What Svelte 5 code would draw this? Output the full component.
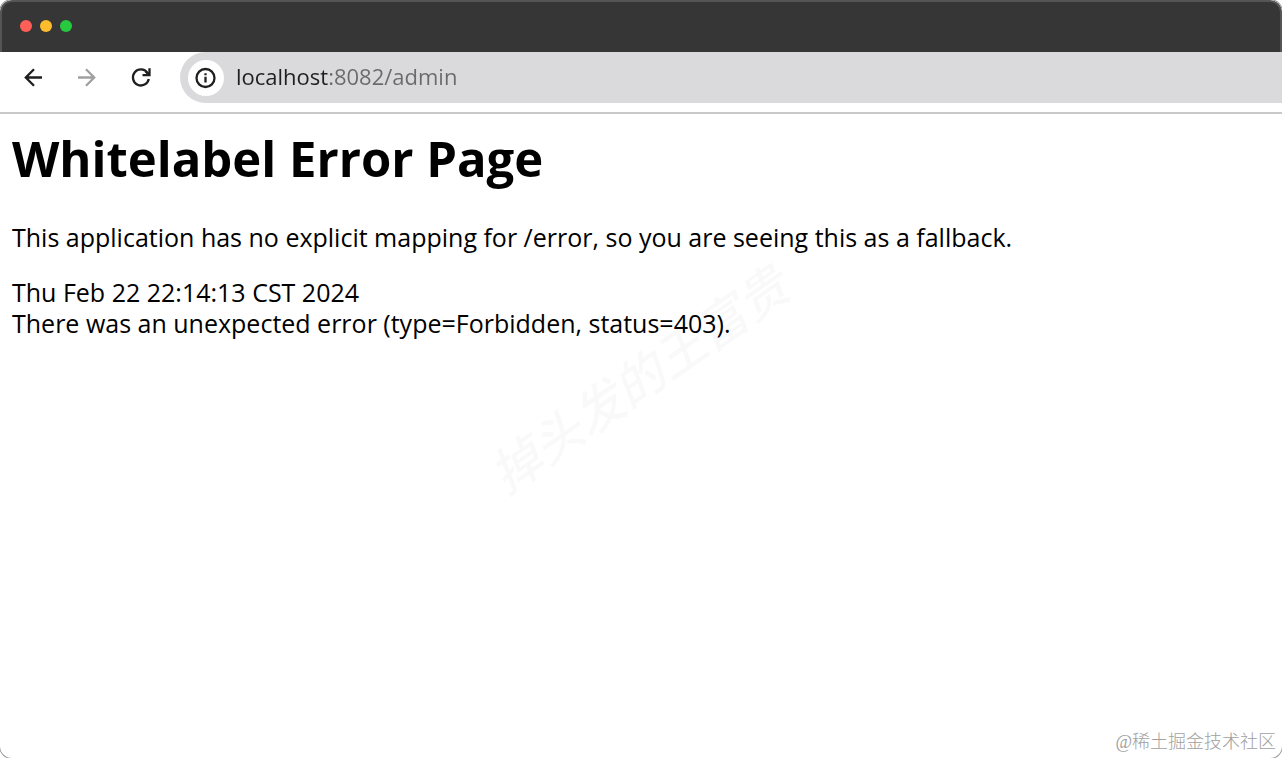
<script>
	let address = 'localhost:8082/admin';

	const lights = ['#ff5f56', '#ffbd2e', '#27c93f'];
</script>

<div class="window">
	<div class="titlebar">
		{#each lights as color}
			<span class="light" style="background: {color}"></span>
		{/each}
	</div>

	<div class="toolbar">
		<button class="tool" aria-label="Back">
			<svg viewBox="0 0 22 22"><path d="M20 11.500H4M12 3.300L3.800 11.500l8.200 8.200" /></svg>
		</button>
		<button class="tool tool__disabled" aria-label="Forward" disabled>
			<svg viewBox="0 0 22 22"><path d="M2 11.500H18M10 3.300l8.200 8.200-8.200 8.200" /></svg>
		</button>
		<button class="tool" aria-label="Reload">
			<svg viewBox="0 0 22 22">
				<path d="M18.800 13a8 8 0 1 1-1.400-6.300L19 8.500" />
				<path d="M19.500 2.200v7H12.500M19 8.500L15.500 5.500" />
			</svg>
		</button>
		<div class="address">
			<button class="info" aria-label="View site information">
				<svg viewBox="0 0 22 22">
					<circle cx="10.500" cy="11" r="9" />
					<path d="M10.500 9.800v5.700M10.500 6.200v2.100" />
				</svg>
			</button>
			<input class="address__input" type="text" aria-label="Address" spellcheck="false" bind:value={address} />
		</div>
	</div>

	<main class="page">
		<h1>Whitelabel Error Page</h1>
		<p>This application has no explicit mapping for /error, so you are seeing this as a fallback.</p>
		<div>Thu Feb 22 22:14:13 CST 2024</div>
		<div>There was an unexpected error (type=Forbidden, status=403).</div>
	</main>

	<div class="watermark">掉头发的王富贵</div>
	<div class="credit">@稀土掘金技术社区</div>
</div>

<style>
	:global(body) {
		background: #fff;
	}

	.window {
		box-sizing: border-box;
		position: relative;
		min-height: 100vh;
		overflow: hidden;
		border-radius: 12px;
		background: #fff;
		box-shadow: 0 0 0 1px #999;
		font-family: 'Open Sans', 'Noto Sans CJK SC', sans-serif;
	}

	.titlebar {
		box-sizing: border-box;
		height: 52px;
		display: flex;
		align-items: center;
		gap: 8px;
		padding: 0 18px 2px;
		border: 2px solid #555;
		border-bottom: 0;
		border-radius: 12px 12px 0 0;
		background: #363636;
	}

	.light {
		width: 12px;
		height: 12px;
		border-radius: 50%;
	}

	.toolbar {
		display: flex;
		align-items: flex-start;
		padding-left: 22px;
		padding-bottom: 9px;
		border-bottom: 2px solid #c9c9c9;
	}

	button {
		display: flex;
		align-items: center;
		justify-content: center;
		padding: 0;
		border: 0;
		background: none;
		color: #1f1f1f;
	}

	svg {
		width: 22px;
		height: 22px;
		fill: none;
		stroke: currentColor;
		stroke-width: 2.3;
	}

	.tool {
		width: 22px;
		height: 50px;
		margin-right: 32px;
	}

	.tool__disabled {
		color: #a0a0a0;
	}

	.address {
		flex: 1;
		display: flex;
		align-items: center;
		gap: 12px;
		height: 51px;
		padding-left: 8px;
		margin-left: -4px;
		border-radius: 26px 0 0 26px;
		background: #dadadc;
	}

	.info {
		width: 36px;
		height: 36px;
		border-radius: 50%;
		background: #fff;
	}

	/* host name is darker than the port and path */
	.address__input {
		flex: 1;
		min-width: 0;
		height: 34px;
		padding: 0 0 3px;
		border: 0;
		outline: 0;
		background: linear-gradient(to right, #1f1f1f 92px, #6a6a6a 92px);
		background-clip: text;
		-webkit-text-fill-color: transparent;
		font: inherit;
		font-size: 22px;
	}

	.page {
		padding: 12px;
		color: #000;
		font-size: 25px;
		line-height: 31px;
	}

	h1 {
		margin: 0;
		font-size: 49px;
		line-height: 64px;
	}

	p {
		margin: 32px 0 24px;
	}

	.watermark {
		position: absolute;
		top: 50%;
		left: 50%;
		transform: translate(-51%, -52%) rotate(-35deg);
		color: rgba(0, 0, 0, 0.025);
		font-size: 50px;
		font-style: italic;
		font-weight: 500;
		white-space: nowrap;
		pointer-events: none;
	}

	.credit {
		position: absolute;
		right: 6px;
		bottom: 3px;
		color: #a0a0a0;
		font-family: 'Liberation Serif', 'Noto Sans CJK SC', serif;
		font-size: 18px;
		font-weight: 300;
		line-height: 26px;
	}
</style>
